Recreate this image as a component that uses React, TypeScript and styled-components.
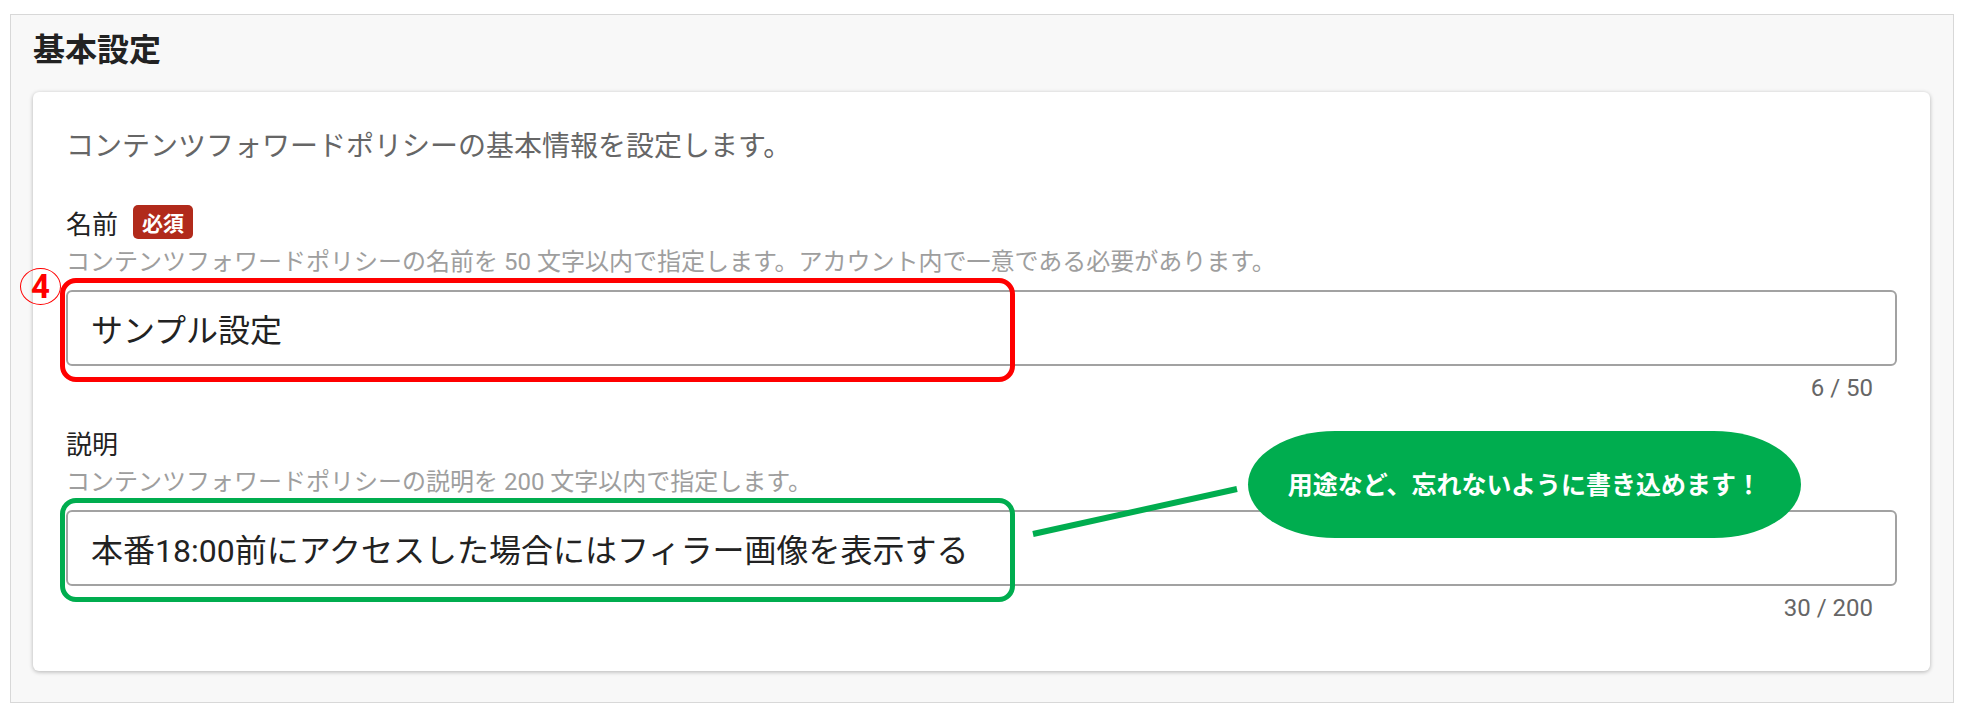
import React from "react";
import styled, { createGlobalStyle } from "styled-components";

const GlobalStyle = createGlobalStyle`
  body {
    margin: 0;
    background: #ffffff;
    font-family: Roboto, "Noto Sans CJK JP", sans-serif;
  }
`;

const Panel = styled.section`
  box-sizing: border-box;
  width: 1944px;
  height: 689px;
  margin: 14px 0 0 10px;
  padding: 11px 23px 0 22px;
  background: #f8f8f8;
  border: 1px solid #d8d8d8;
`;

const Title = styled.h2`
  margin: 0;
  font-size: 32px;
  line-height: 48px;
  font-weight: 700;
  color: #222;
`;

const Card = styled.div`
  box-sizing: border-box;
  margin-top: 18px;
  height: 579px;
  padding: 35px 33px 0 33px;
  background: #fff;
  border-radius: 6px;
  box-shadow: 0 1px 4px rgba(0, 0, 0, 0.28);
`;

const Lead = styled.p`
  margin: 0;
  font-size: 28px;
  line-height: 40px;
  color: #666;
`;

const Field = styled.div<{ $first?: boolean }>`
  margin-top: ${(p) => (p.$first ? "37px" : "21px")};
  display: flex;
  flex-direction: column;
`;

const LabelRow = styled.div`
  display: flex;
  align-items: center;
  gap: 15px;
  height: 36px;
`;

const Label = styled.span`
  font-size: 26px;
  color: #222;
`;

const Required = styled.span`
  display: inline-flex;
  align-items: center;
  justify-content: center;
  width: 60px;
  height: 34px;
  border-radius: 5px;
  background: #b12a1b;
  color: #fff;
  font-size: 21px;
  font-weight: 700;
`;

const Help = styled.div`
  margin-top: 6px;
  font-size: 24px;
  line-height: 32px;
  color: #9e9e9e;
  white-space: nowrap;
`;

const InputWrap = styled.div`
  position: relative;
  margin-top: 12px;
`;

const Input = styled.div`
  box-sizing: border-box;
  height: 76px;
  display: flex;
  align-items: center;
  padding-left: 23px;
  border: 2px solid #a2a2a2;
  border-radius: 6px;
  font-size: 32px;
  color: #222;
  white-space: nowrap;
`;

const Counter = styled.div`
  margin-top: 7px;
  align-self: flex-end;
  margin-right: 24px;
  font-size: 24px;
  line-height: 30px;
  color: #666;
`;

const Highlight = styled.div<{ $color: string }>`
  position: absolute;
  left: -6px;
  top: -12px;
  width: 955px;
  height: 104px;
  box-sizing: border-box;
  border: 5px solid ${(p) => p.$color};
  border-radius: 16px;
  pointer-events: none;
`;

const StepMark = styled.span`
  position: absolute;
  left: -46px;
  top: -22px;
  width: 41px;
  height: 37px;
  box-sizing: border-box;
  border: 1.5px solid #ff0000;
  border-radius: 50%;
  display: flex;
  align-items: center;
  justify-content: center;
  color: #ff0000;
  font-size: 33px;
  font-weight: 700;
  line-height: 1;
`;

const Bubble = styled.div`
  position: absolute;
  left: 1182px;
  top: -79px;
  width: 553px;
  height: 107px;
  box-sizing: border-box;
  border-radius: 88px / 54px;
  background: #00ad4f;
  color: #fff;
  display: flex;
  align-items: center;
  justify-content: center;
  padding-bottom: 4px;
  font-size: 25px;
  font-weight: 700;
  white-space: nowrap;
`;

const Leader = styled.svg`
  position: absolute;
  left: 960px;
  top: -28px;
  overflow: visible;
`;

export default function App() {
  return (
    <>
      <GlobalStyle />
      <Panel>
        <Title>基本設定</Title>
        <Card>
          <Lead>コンテンツフォワードポリシーの基本情報を設定します。</Lead>

          <Field $first>
            <LabelRow>
              <Label>名前</Label>
              <Required>必須</Required>
            </LabelRow>
            <Help>
              コンテンツフォワードポリシーの名前を 50 文字以内で指定します。アカウント内で一意である必要があります。
            </Help>
            <InputWrap>
              <Input>サンプル設定</Input>
              <Highlight $color="#ff0000" />
              <StepMark>4</StepMark>
            </InputWrap>
            <Counter>6 / 50</Counter>
          </Field>

          <Field>
            <LabelRow>
              <Label>説明</Label>
            </LabelRow>
            <Help>コンテンツフォワードポリシーの説明を 200 文字以内で指定します。</Help>
            <InputWrap>
              <Input>本番18:00前にアクセスした場合にはフィラー画像を表示する</Input>
              <Highlight $color="#00ad4f" />
              <Leader width="220" height="60" viewBox="0 0 220 60">
                <line x1="7" y1="52" x2="211" y2="7" stroke="#00ad4f" strokeWidth="6" />
              </Leader>
              <Bubble>用途など、忘れないように書き込めます！</Bubble>
            </InputWrap>
            <Counter>30 / 200</Counter>
          </Field>
        </Card>
      </Panel>
    </>
  );
}
